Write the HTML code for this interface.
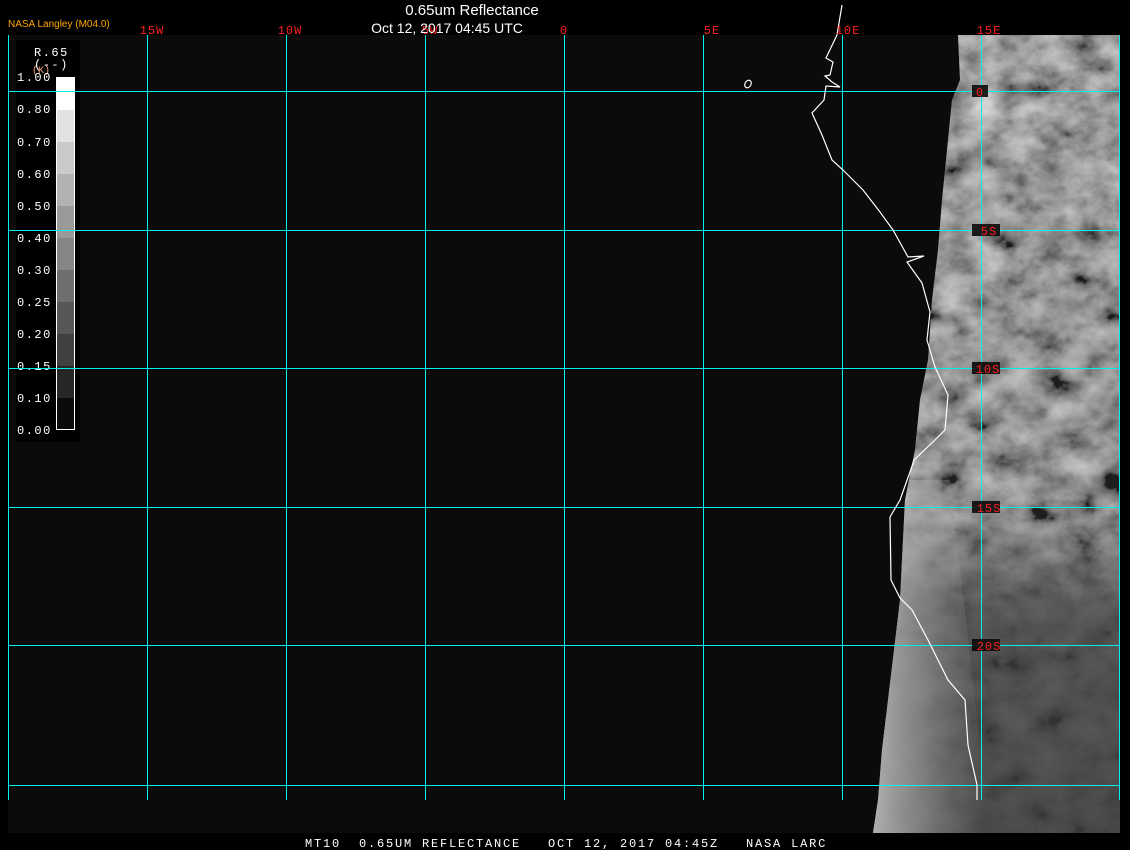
<!DOCTYPE html>
<html><head><meta charset="utf-8"><style>
html,body{margin:0;padding:0;background:#000;width:1130px;height:850px;overflow:hidden}
svg{display:block}
</style></head><body>
<svg width="1130" height="850" xmlns="http://www.w3.org/2000/svg" font-family="Liberation Mono, monospace">
<defs>
<filter id="tex" x="0" y="0" width="100%" height="100%">
<feTurbulence type="fractalNoise" baseFrequency="0.03 0.04" numOctaves="4" seed="7" result="n"/>
<feColorMatrix in="n" type="matrix" values="0.33 0.33 0.33 0 0  0.33 0.33 0.33 0 0  0.33 0.33 0.33 0 0  0 0 0 0 1" result="g"/>
<feComponentTransfer in="g"><feFuncR type="linear" slope="2.4" intercept="-0.75"/><feFuncG type="linear" slope="2.4" intercept="-0.75"/><feFuncB type="linear" slope="2.4" intercept="-0.75"/></feComponentTransfer>
</filter>
<linearGradient id="edge" x1="0" x2="1" y1="0" y2="0">
<stop offset="0" stop-color="#fff" stop-opacity="0.9"/>
<stop offset="0.2" stop-color="#fff" stop-opacity="0.35"/>
<stop offset="0.45" stop-color="#fff" stop-opacity="0"/>
</linearGradient>
<linearGradient id="vdark" x1="0" x2="0" y1="0" y2="1">
<stop offset="0" stop-color="#3a3a3a" stop-opacity="0"/>
<stop offset="0.6" stop-color="#3a3a3a" stop-opacity="0.15"/>
<stop offset="0.72" stop-color="#3a3a3a" stop-opacity="0.75"/>
<stop offset="1" stop-color="#3a3a3a" stop-opacity="0.85"/>
</linearGradient>
<linearGradient id="strip" x1="0" x2="1" y1="0" y2="0">
<stop offset="0" stop-color="#ddd" stop-opacity="0.8"/>
<stop offset="0.5" stop-color="#aaa" stop-opacity="0.5"/>
<stop offset="1" stop-color="#888" stop-opacity="0"/>
</linearGradient>
<clipPath id="cl"><polygon points="958,35 960,80 952,100 947,150 942,200 938,250 932,300 928,360 920,400 915,450 905,500 900,600 888,700 882,750 878,800 873,833 1120,833 1120,35"/></clipPath>
</defs>
<rect x="8" y="35" width="1112" height="798" fill="#0b0b0b"/>
<g clip-path="url(#cl)">
<rect x="860" y="35" width="260" height="798" fill="#666"/>
<rect x="860" y="35" width="260" height="798" filter="url(#tex)" opacity="0.75"/>
<rect x="860" y="35" width="260" height="798" fill="url(#vdark)"/>
<polygon points="860,35 1000,35 990,300 950,500 860,500" fill="url(#edge)"/>
<polygon points="860,480 950,480 990,833 860,833" fill="url(#strip)"/>
</g>
<g stroke="#00f0f0" stroke-width="1" fill="none">
<line x1="8" y1="91.5" x2="1120" y2="91.5"/>
<line x1="8" y1="230.5" x2="1120" y2="230.5"/>
<line x1="8" y1="368.5" x2="1120" y2="368.5"/>
<line x1="8" y1="507.5" x2="1120" y2="507.5"/>
<line x1="8" y1="645.5" x2="1120" y2="645.5"/>
<line x1="8" y1="785.5" x2="1120" y2="785.5"/>
<line x1="8.5" y1="35" x2="8.5" y2="800"/>
<line x1="147.5" y1="35" x2="147.5" y2="800"/>
<line x1="286.5" y1="35" x2="286.5" y2="800"/>
<line x1="425.5" y1="35" x2="425.5" y2="800"/>
<line x1="564.5" y1="35" x2="564.5" y2="800"/>
<line x1="703.5" y1="35" x2="703.5" y2="800"/>
<line x1="842.5" y1="35" x2="842.5" y2="800"/>
<line x1="981.5" y1="35" x2="981.5" y2="800"/>
<line x1="1119.5" y1="35" x2="1119.5" y2="800"/>
</g>
<g stroke="#fff" stroke-width="1.2" fill="none">
<polyline points="842,5 837,35 826,58 833,62 830,75 825,76 832,82 840,87 826,86 824,100 812,113 822,135 832,160 843,170 863,190 880,212 893,230 903,248 908,257 924,256 907,262 922,283 930,312 927,340 935,367 948,395 945,430 935,440 914,460 910,472 900,500 890,517 891,580 900,598 912,610 928,640 948,680 965,700 968,745 977,785 977,800"/>
<ellipse cx="748" cy="84" rx="3" ry="4" transform="rotate(30 748 84)"/>
</g>
<g fill="#0b0b0b" opacity="0.9"><rect x="972" y="85" width="16" height="12"/><rect x="972" y="224" width="28" height="12"/><rect x="972" y="362" width="28" height="12"/><rect x="972" y="501" width="28" height="12"/><rect x="972" y="639" width="28" height="12"/></g>
<g fill="#ff2020" font-size="12" text-anchor="middle" letter-spacing="1">
<text x="152" y="34">15W</text><text x="290" y="34">10W</text><text x="430" y="34">5W</text><text x="564" y="34">0</text><text x="712" y="34">5E</text><text x="848" y="34">10E</text><text x="989" y="34">15E</text>
<text x="980" y="96">0</text><text x="989" y="235">5S</text><text x="988" y="373">10S</text><text x="989" y="512">15S</text><text x="989" y="650">20S</text>
</g>
<text x="472" y="15" fill="#fff" font-family="Liberation Sans, sans-serif" font-size="15" text-anchor="middle">0.65um Reflectance</text>
<text x="447" y="33" fill="#fff" font-family="Liberation Sans, sans-serif" font-size="14" text-anchor="middle">Oct 12, 2017 04:45 UTC</text>
<text x="8" y="27" fill="#ffa500" font-family="Liberation Sans, sans-serif" font-size="10">NASA Langley (M04.0)</text>
<rect x="16" y="40" width="64" height="402" fill="#000"/>
<g fill="#fff" font-size="12" letter-spacing="1.5">
<text x="34" y="56">R.65</text><text x="34" y="68">(--)</text>
</g>
<text x="32" y="73" fill="#f0a080" font-size="10">(K)</text>
<g fill="#fff" font-size="12" letter-spacing="1.5">
<text x="17" y="81">1.00</text><text x="17" y="113">0.80</text><text x="17" y="146">0.70</text><text x="17" y="178">0.60</text><text x="17" y="210">0.50</text><text x="17" y="242">0.40</text><text x="17" y="274">0.30</text><text x="17" y="306">0.25</text><text x="17" y="338">0.20</text><text x="17" y="370">0.15</text><text x="17" y="402">0.10</text><text x="17" y="434">0.00</text>
</g>
<g>
<rect x="56" y="77" width="19" height="33" fill="#fff"/>
<rect x="56" y="110" width="19" height="32" fill="#e2e2e2"/>
<rect x="56" y="142" width="19" height="32" fill="#cacaca"/>
<rect x="56" y="174" width="19" height="32" fill="#b2b2b2"/>
<rect x="56" y="206" width="19" height="32" fill="#9a9a9a"/>
<rect x="56" y="238" width="19" height="32" fill="#858585"/>
<rect x="56" y="270" width="19" height="32" fill="#6e6e6e"/>
<rect x="56" y="302" width="19" height="32" fill="#575757"/>
<rect x="56" y="334" width="19" height="32" fill="#404040"/>
<rect x="56" y="366" width="19" height="32" fill="#262626"/>
<rect x="56" y="398" width="19" height="32" fill="#0b0b0b"/>
<rect x="56.5" y="77.5" width="18" height="352" fill="none" stroke="#fff"/>
</g>
<g stroke="#00f0f0" stroke-width="1"><line x1="8" y1="91.5" x2="80" y2="91.5"/><line x1="8" y1="230.5" x2="80" y2="230.5"/><line x1="8" y1="368.5" x2="80" y2="368.5"/></g>
<text x="305" y="847" fill="#fff" font-size="12" xml:space="preserve" letter-spacing="1.8">MT10  0.65UM REFLECTANCE   OCT 12, 2017 04:45Z   NASA LARC</text>
</svg>
</body></html>
